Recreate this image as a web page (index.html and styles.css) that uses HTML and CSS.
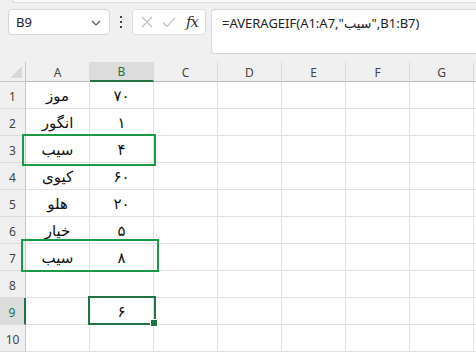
FILE: index.html
```html
<!DOCTYPE html>
<html lang="fa">
<head>
<meta charset="utf-8">
<link rel="stylesheet" href="styles.css">
</head>
<body dir="ltr">
<div class="ribbon-edge"></div>
<div class="toolbar">
  <div class="namebox">
    <span class="name">B9</span>
    <svg class="chev" width="10" height="6" viewBox="0 0 10 6"><path d="M1 1 L5 5 L9 1" fill="none" stroke="#555" stroke-width="1.2"/></svg>
  </div>
  <div class="dots"><span></span><span></span><span></span></div>
  <div class="iconbox">
    <svg width="12" height="12" viewBox="0 0 12 12"><path d="M1 1 L11 11 M11 1 L1 11" stroke="#bdbdbd" stroke-width="1.1" fill="none"/></svg>
    <svg width="14" height="11" viewBox="0 0 14 11"><path d="M1 5.5 L5 9.5 L13 1" stroke="#bdbdbd" stroke-width="1.1" fill="none"/></svg>
    <span class="fx">fx</span>
  </div>
  <div class="formula">=AVERAGEIF(A1:A7,"سیب",B1:B7)</div>
</div>
<div class="sheet">
  <div class="hd corner"><span class="tri"></span></div>
  <div class="hd col">A</div>
  <div class="hd col sel">B</div>
  <div class="hd col">C</div>
  <div class="hd col">D</div>
  <div class="hd col">E</div>
  <div class="hd col">F</div>
  <div class="hd col">G</div>
  <div class="hd col last"></div>

  <div class="hd row">1</div><div class="c ar">موز</div><div class="c ar">۷۰</div><div class="c"></div><div class="c"></div><div class="c"></div><div class="c"></div><div class="c"></div><div class="c last"></div>
  <div class="hd row">2</div><div class="c ar">انگور</div><div class="c ar">۱</div><div class="c"></div><div class="c"></div><div class="c"></div><div class="c"></div><div class="c"></div><div class="c last"></div>
  <div class="hd row">3</div><div class="c ar">سیب</div><div class="c ar">۴</div><div class="c"></div><div class="c"></div><div class="c"></div><div class="c"></div><div class="c"></div><div class="c last"></div>
  <div class="hd row">4</div><div class="c ar">کیوی</div><div class="c ar">۶۰</div><div class="c"></div><div class="c"></div><div class="c"></div><div class="c"></div><div class="c"></div><div class="c last"></div>
  <div class="hd row">5</div><div class="c ar">هلو</div><div class="c ar">۲۰</div><div class="c"></div><div class="c"></div><div class="c"></div><div class="c"></div><div class="c"></div><div class="c last"></div>
  <div class="hd row">6</div><div class="c ar">خیار</div><div class="c ar">۵</div><div class="c"></div><div class="c"></div><div class="c"></div><div class="c"></div><div class="c"></div><div class="c last"></div>
  <div class="hd row">7</div><div class="c ar">سیب</div><div class="c ar">۸</div><div class="c"></div><div class="c"></div><div class="c"></div><div class="c"></div><div class="c"></div><div class="c last"></div>
  <div class="hd row">8</div><div class="c"></div><div class="c"></div><div class="c"></div><div class="c"></div><div class="c"></div><div class="c"></div><div class="c"></div><div class="c last"></div>
  <div class="hd row sel">9</div><div class="c"></div><div class="c ar">۶</div><div class="c"></div><div class="c"></div><div class="c"></div><div class="c"></div><div class="c"></div><div class="c last"></div>
  <div class="hd row">10</div><div class="c"></div><div class="c"></div><div class="c"></div><div class="c"></div><div class="c"></div><div class="c"></div><div class="c"></div><div class="c last"></div>

  <div class="mark mark-r3"></div>
  <div class="mark mark-r7"></div>
  <div class="active"><span class="handle"></span></div>
</div>
</body>
</html>
```

FILE: styles.css
```css
* { box-sizing: border-box; }
html, body { margin: 0; padding: 0; }
body {
  width: 476px;
  height: 352px;
  overflow: hidden;
  background: #f0f0f0;
  font-family: "Noto Sans", "DejaVu Sans", sans-serif;
  color: #222;
}
.ribbon-edge {
  height: 3px;
  margin-left: 12px;
  background: #fafafa;
  border-bottom: 1px solid #dcdcdc;
  border-left: 1px solid #dcdcdc;
  border-bottom-left-radius: 4px;
}
.toolbar {
  display: flex;
  align-items: flex-start;
  padding: 6px 0 0 8px;
  height: 59px;
}
.namebox {
  width: 102px;
  height: 26px;
  background: #fff;
  border: 1px solid #d6d6d6;
  border-radius: 4px;
  display: flex;
  align-items: center;
  justify-content: space-between;
  padding: 0 8px 0 7px;
}
.name { font-size: 13px; color: #222; }
.chev { margin-top: 1px; }
.dots {
  width: 22px;
  height: 26px;
  display: flex;
  flex-direction: column;
  align-items: center;
  justify-content: center;
  gap: 3px;
}
.dots span { width: 2px; height: 2px; background: #444; }
.iconbox {
  width: 74px;
  height: 26px;
  background: #fff;
  border: 1px solid #dedede;
  border-radius: 4px;
  display: flex;
  align-items: center;
  padding: 0 5px 0 8px;
  gap: 9px;
}
.fx {
  font-family: "DejaVu Serif", "Liberation Serif", serif;
  font-style: italic;
  font-size: 15px;
  color: #333;
  margin-left: 1px;
  letter-spacing: -1px;
}
.formula {
  margin-left: 5px;
  flex: 1;
  height: 45px;
  background: #fff;
  border: 1px solid #d6d6d6;
  border-right: none;
  border-radius: 4px 0 0 4px;
  padding: 4px 0 0 10px;
  font-size: 13px;
  color: #222;
  white-space: nowrap;
}
.sheet {
  position: relative;
  display: grid;
  grid-template-columns: 26px repeat(7, 64px) 1fr;
  grid-template-rows: 20px repeat(10, 27px);
  background: #fff;
}
.hd {
  background: #f0f0f0;
  color: #444;
  font-family: "Noto Sans", sans-serif;
  font-size: 12px;
  display: flex;
  justify-content: center;
}
.corner {
  border-right: 1px solid #c8c8c8;
  border-bottom: 1px solid #c8c8c8;
  position: relative;
}
.tri {
  position: absolute;
  right: 3px;
  bottom: 3px;
  width: 0;
  height: 0;
  border-left: 12px solid transparent;
  border-bottom: 12px solid #d8d8d8;
}
.col {
  align-items: center;
  border-right: 1px solid #dcdcdc;
  border-bottom: 1px solid #bdbdbd;
  padding-top: 1px;
}
.col.last { border-right: none; }
.col.sel {
  background: #dcdcdc;
  color: #217346;
  border-bottom: 2px solid #217346;
}
.row {
  align-items: flex-end;
  padding-bottom: 3px;
  border-right: 1px solid #c8c8c8;
  border-bottom: 1px solid #dcdcdc;
}
.row.sel {
  background: #dcdcdc;
  color: #217346;
  border-right: 2px solid #217346;
}
.c {
  border-right: 1px solid #e1e1e1;
  border-bottom: 1px solid #e1e1e1;
  display: flex;
  align-items: flex-end;
  justify-content: center;
  padding-bottom: 3px;
  font-size: 14px;
  color: #111;
}
.c.last { border-right: none; }
.ar { font-family: "DejaVu Sans", sans-serif; direction: rtl; font-size: 15px; }
.mark {
  position: absolute;
  border: 2px solid #1a9b48;
}
.mark-r3 { left: 22px; top: 72px; width: 134px; height: 32px; }
.mark-r7 { left: 21px; top: 177px; width: 138px; height: 33px; }
.active {
  position: absolute;
  left: 88px;
  top: 234px;
  width: 68px;
  height: 29px;
  border: 2px solid #217346;
}
.handle {
  position: absolute;
  right: -3px;
  bottom: -4px;
  width: 6px;
  height: 6px;
  background: #217346;
  border: 1px solid #fff;
  box-sizing: content-box;
  transform: translate(1px, 0);
}
```
